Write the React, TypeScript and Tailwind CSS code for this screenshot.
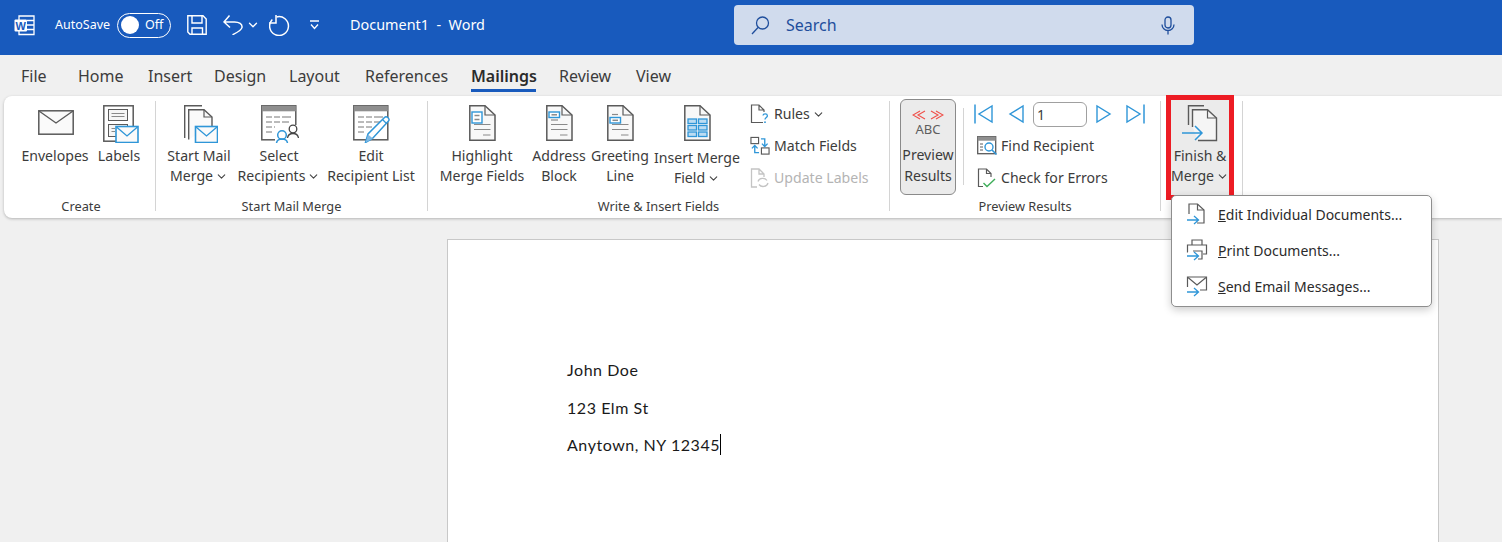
import type { ReactNode } from "react"
import { ChevronDown } from "lucide-react"

const GRAY = "#5a5a5a"
const BLUE = "#2f96d8"
const DIS = "#c4c4c4"

const tabs = ["File", "Home", "Insert", "Design", "Layout", "References", "Mailings", "Review", "View"]
const tabWidths: Record<string, string> = {
  File: "w-[57px]",
  Home: "w-[70px]",
  Insert: "w-[66px]",
  Design: "w-[75px]",
  Layout: "w-[76px]",
  References: "w-[106px]",
  Mailings: "w-[88px]",
  Review: "w-[77px]",
  View: "w-[50px]",
}

function Caret() {
  return <ChevronDown size={13} strokeWidth={2} className="inline-block ml-[2px] align-[-2px] text-[#444]" />
}

function MiniEnvelope({ x, y, w = 22, h = 16 }: { x: number; y: number; w?: number; h?: number }) {
  return (
    <>
      <rect x={x + 0.5} y={y + 0.5} width={w} height={h} fill="#fafafa" stroke={BLUE} strokeWidth="1.6" />
      <path d={`M${x + 1} ${y + 1}L${x + w / 2 + 0.5} ${y + h * 0.62}L${x + w} ${y + 1}`} fill="none" stroke={BLUE} strokeWidth="1.4" />
    </>
  )
}

function EnvelopeIcon() {
  return (
    <svg width="36" height="25" viewBox="0 0 36 25" className="mb-[8px] ml-[1px]">
      <rect x="0.800" y="0.800" width="34.400" height="23.400" fill="#fafafa" stroke={GRAY} strokeWidth="1.500" />
      <path d="M1 1L18 13L35 1" fill="none" stroke={GRAY} strokeWidth="1.400" />
    </svg>
  )
}

function LabelsIcon() {
  return (
    <svg width="36" height="38" viewBox="0 0 36 38" className="ml-[4px]">
      <rect x="0.800" y="0.800" width="29.400" height="35.400" fill="#fff" stroke={GRAY} strokeWidth="1.500" />
      <rect x="5.500" y="4.500" width="19" height="11" fill="#f6f6f6" stroke={GRAY} strokeWidth="1" />
      <path d="M8.500 8.500H21.500M8.500 11.500H21.500" stroke="#8a8a8a" strokeWidth="1" />
      <rect x="5.500" y="19.500" width="19" height="12" fill="#f6f6f6" stroke={GRAY} strokeWidth="1" />
      <path d="M8.500 23.500H12M8.500 26.500H12" stroke="#8a8a8a" strokeWidth="1" />
      <MiniEnvelope x={12.500} y={21} />
    </svg>
  )
}

function MergeDocIcon() {
  return (
    <svg width="34" height="38" viewBox="0 0 34 38" className="ml-[4px]">
      <path d="M0.700 33V0.700H18" fill="none" stroke={GRAY} strokeWidth="1.400" />
      <path d="M4.700 34.500V4.700H20L28 12V21" fill="#fafafa" stroke={GRAY} strokeWidth="1.400" />
      <path d="M20 4.700V12H28" fill="none" stroke={GRAY} strokeWidth="1.200" />
      <MiniEnvelope x={11} y={21} />
    </svg>
  )
}

function TableHead() {
  return (
    <>
      <rect x="0.800" y="0.800" width="34" height="34" fill="#fff" stroke={GRAY} strokeWidth="1.500" />
      <rect x="0.800" y="0.800" width="34" height="5.500" fill="#8f8f8f" />
      <path d="M5 12H11M13 12H19M21 12H30M5 17H11M13 17H19M21 17H28M5 22H11M13 22H19M5 27H11" stroke="#777" strokeWidth="1" />
    </>
  )
}

function SelectIcon() {
  return (
    <svg width="38" height="38" viewBox="0 0 38 38" className="ml-[1px]">
      <TableHead />
      <rect x="14" y="20" width="24" height="18" fill="#fff" />
      <circle cx="32" cy="24" r="3.800" fill="#fff" stroke="#444" strokeWidth="1.300" />
      <path d="M26.500 33c.5-3.200 2.500-4.500 5.500-4.500s5 1.300 5.500 4.500" fill="none" stroke="#444" strokeWidth="1.300" />
      <circle cx="21" cy="30" r="4.300" fill="#fff" stroke={BLUE} strokeWidth="1.500" />
      <path d="M15.500 38c.5-3 2.500-4 5.500-4s5 1 5.500 4" fill="none" stroke={BLUE} strokeWidth="1.500" />
    </svg>
  )
}

function EditListIcon() {
  return (
    <svg width="38" height="38" viewBox="0 0 38 38" className="ml-[1px]">
      <TableHead />
      <path d="M12.500 37.500L15 29L31.500 12.500C33.500 10.500 37.500 14 35.500 16L19.500 33.500Z" fill="#fff" stroke={BLUE} strokeWidth="1.500" />
      <path d="M12.500 37.500L15 29.500L20 33.500Z" fill="#7fb9e3" />
      <path d="M29.500 14.500L33.500 18.500" stroke={BLUE} strokeWidth="1.200" />
    </svg>
  )
}

function FieldPage({ children, bars = true }: { children: ReactNode; bars?: boolean }) {
  return (
    <svg width="27" height="36" viewBox="0 0 27 36" className="mb-[2px]">
      <path d="M0.800 0.800H16L26 10V35.200H0.800Z" fill="#f8f8f8" stroke={GRAY} strokeWidth="1.500" />
      <path d="M16 0.800V10H26" fill="none" stroke={GRAY} strokeWidth="1.200" />
      {bars && <path d="M5 19.500H21.500M5 24.500H21.500M14 30H21.500" stroke="#8a8a8a" strokeWidth="1.200" />}
      {children}
    </svg>
  )
}

function InsertFieldIcon() {
  const cells = [14, 20.500, 27]
  return (
    <FieldPage bars={false}>
      {cells.map((y) => (
        <g key={y}>
          <rect x="4" y={y} width="8.500" height="4.500" fill="#bcdcf2" stroke={BLUE} strokeWidth="1.300" />
          <rect x="14.500" y={y} width="8.500" height="4.500" fill="#bcdcf2" stroke={BLUE} strokeWidth="1.300" />
        </g>
      ))}
    </FieldPage>
  )
}

function RulesIcon() {
  return (
    <svg width="20" height="20" viewBox="0 0 20 20">
      <path d="M13 18.500H1.500V1H9L14 6V8M9 1V6H14" fill="none" stroke={GRAY} strokeWidth="1.200" />
      <path d="M13 11.500c.3-2 4.200-2.200 4.400.3.100 1.700-2.400 1.700-2.400 3.700" fill="none" stroke={BLUE} strokeWidth="1.300" />
      <circle cx="15" cy="18.200" r="0.900" fill={BLUE} />
    </svg>
  )
}

function MatchIcon() {
  return (
    <svg width="21" height="20" viewBox="0 0 21 20">
      <rect x="1" y="1" width="8" height="6.500" fill="#fff" stroke={GRAY} strokeWidth="1.200" />
      <rect x="12" y="12" width="8" height="6.500" fill="#fff" stroke={GRAY} strokeWidth="1.200" />
      <path d="M11.500 2.500H15.500V10M12.500 7.500L15.500 10.500L18.500 7.500" fill="none" stroke={BLUE} strokeWidth="1.400" />
      <path d="M9.500 17H5V10M2 12.500L5 9.500L8 12.500" fill="none" stroke={BLUE} strokeWidth="1.400" />
    </svg>
  )
}

function UpdateIcon() {
  return (
    <svg width="20" height="20" viewBox="0 0 20 20">
      <path d="M7 19H1.500V1H9L14 6V9M9 1V6H14" fill="none" stroke={DIS} strokeWidth="1.300" />
      <path d="M8 13.500a5 4.500 0 0 1 9-1M18 15a5 4.500 0 0 1-9 1.500" fill="none" stroke={DIS} strokeWidth="1.300" />
    </svg>
  )
}

function FindIcon() {
  return (
    <svg width="21" height="20" viewBox="0 0 21 20" className="shrink-0">
      <rect x="0.700" y="0.700" width="18" height="17" fill="#fff" stroke={GRAY} strokeWidth="1.300" />
      <rect x="0.700" y="0.700" width="18" height="4" fill="#8f8f8f" />
      <path d="M3 8H6M3 11H6M3 14H6" stroke={GRAY} strokeWidth="1" />
      <circle cx="12" cy="11" r="4" fill="#fff" stroke={BLUE} strokeWidth="1.400" />
      <path d="M15 14L19.500 18.500" stroke={BLUE} strokeWidth="1.600" />
    </svg>
  )
}

function CheckIcon() {
  return (
    <svg width="20" height="20" viewBox="0 0 20 20">
      <path d="M6 18.500H1.500V1H9.500L14 5.500V9M9.500 1V5.500H14" fill="none" stroke={GRAY} strokeWidth="1.200" />
      <path d="M6.500 15L10 18.500L18 11" fill="none" stroke="#3fae5a" strokeWidth="1.400" />
    </svg>
  )
}

function NavIcon({ dir, bar }: { dir: "l" | "r"; bar?: boolean }) {
  return (
    <svg width="20" height="20" viewBox="0 0 20 20" className="shrink-0">
      {dir === "l" ? (
        <>
          {bar && <path d="M1 0.500V19.500" stroke={BLUE} strokeWidth="1.500" />}
          <path d="M18 2V18L5 10Z" fill="#fff" stroke={BLUE} strokeWidth="1.400" />
        </>
      ) : (
        <>
          {bar && <path d="M19 0.500V19.500" stroke={BLUE} strokeWidth="1.500" />}
          <path d="M2 2V18L15 10Z" fill="#fff" stroke={BLUE} strokeWidth="1.400" />
        </>
      )}
    </svg>
  )
}

function FinishIcon() {
  return (
    <svg width="36" height="38" viewBox="0 0 36 38">
      <path d="M6.500 20V0.700H22" fill="none" stroke={GRAY} strokeWidth="1.400" />
      <path d="M10.500 22V4.700H25.500L34.500 13V35.500H16" fill="#f5f5f5" stroke={GRAY} strokeWidth="1.400" />
      <path d="M25.500 4.700V13H34.500" fill="none" stroke={GRAY} strokeWidth="1.200" />
      <path d="M0 28H20M13 21L20 28L13 35" fill="none" stroke={BLUE} strokeWidth="1.500" />
    </svg>
  )
}

function MenuArrow() {
  return <path d="M1 17H12M8 13L12.500 17L8 21" fill="none" stroke={BLUE} strokeWidth="1.300" />
}

function MenuDocIcon() {
  return (
    <svg width="22" height="22" viewBox="0 0 22 22">
      <path d="M3 11V1H11.500L18 7V20H11" fill="none" stroke={GRAY} strokeWidth="1.200" />
      <path d="M11.500 1V7H18" fill="none" stroke={GRAY} strokeWidth="1.200" />
      <MenuArrow />
    </svg>
  )
}

function MenuPrintIcon() {
  return (
    <svg width="22" height="22" viewBox="0 0 22 22">
      <path d="M6 6V1H16V6" fill="none" stroke={GRAY} strokeWidth="1.200" />
      <path d="M2 13H1.500V6H20.500V15H17" fill="none" stroke={GRAY} strokeWidth="1.200" />
      <path d="M7 12H16V20H12" fill="none" stroke={GRAY} strokeWidth="1.200" />
      <MenuArrow />
    </svg>
  )
}

function MenuMailIcon() {
  return (
    <svg width="22" height="22" viewBox="0 0 22 22">
      <path d="M1.500 12V2H20.500V15H14" fill="none" stroke={GRAY} strokeWidth="1.200" />
      <path d="M2 2.500L11 10L20 2.500" fill="none" stroke={GRAY} strokeWidth="1.200" />
      <MenuArrow />
    </svg>
  )
}

function WordLogo() {
  return (
    <svg width="21" height="21" viewBox="0 0 21 21">
      <path d="M5 1H20V19.500H5Z" fill="none" stroke="#fff" strokeWidth="1.300" />
      <path d="M13 5.500H20M13 10H20M13 14.500H20" stroke="#fff" strokeWidth="1.300" />
      <rect x="0.500" y="4.500" width="12.500" height="12" rx="1" fill="#fff" />
      <text x="6.700" y="14.500" fontSize="11" fontWeight="700" textAnchor="middle" fill="#185abd" fontFamily="Liberation Sans">W</text>
    </svg>
  )
}

function BigButton({ width, icon, children, lift = "" }: { width: string; icon: ReactNode; children: ReactNode; lift?: string }) {
  return (
    <div className={`${width} shrink-0 flex flex-col items-center text-center`}>
      <div className="h-[42px] flex items-end justify-center">{icon}</div>
      <div className={`mt-[3px] leading-[20px] whitespace-nowrap ${lift}`}>{children}</div>
    </div>
  )
}

function Group({ width, label, children, pad = "" }: { width: string; label: string; children: ReactNode; pad?: string }) {
  return (
    <section className={`${width} shrink-0 h-[110px] mt-[5px] border-r border-[#d4d4d4] flex flex-col`}>
      <div className="flex-1 flex min-h-0">{children}</div>
      <div className={`h-[10px] text-center text-[12.800px] leading-[10px] text-[#3c3c3c] whitespace-nowrap ${pad}`}>{label}</div>
    </section>
  )
}

function SmallRow({ icon, children, muted }: { icon: ReactNode; children: ReactNode; muted?: boolean }) {
  return (
    <div className={`h-[32px] flex items-center gap-[4px] whitespace-nowrap ${muted ? "text-[#b4b4b4]" : ""}`}>
      <span className="w-[20px] flex justify-center">{icon}</span>
      <span>{children}</span>
    </div>
  )
}

function MenuItem({ icon, hot, rest }: { icon: ReactNode; hot: string; rest: string }) {
  return (
    <div className="h-[36px] flex items-center pl-[14px] gap-[10px] whitespace-nowrap text-[14px] text-[#2b2b2b]">
      {icon}
      <span>
        <u>{hot}</u>
        {rest}
      </span>
    </div>
  )
}

export default function App() {
  return (
    <div
      className="relative w-[1502px] h-[542px] overflow-hidden bg-[#f0f0f0] text-[14.100px] text-[#3c3c3c]"
      style={{ fontFamily: '"Noto Sans", sans-serif' }}
    >
      {/* Title bar */}
      <header className="h-[55px] pb-[5px] bg-[#185abd] text-white flex items-center pl-[14px]">
        <WordLogo />
        <span className="ml-[20px] text-[12.500px]">AutoSave</span>
        <div className="ml-[7px] w-[54px] h-[25px] rounded-full border border-white flex items-center pl-[3px] text-[12.500px]">
          <span className="w-[18px] h-[18px] rounded-full bg-white" />
          <span className="ml-[6px]">Off</span>
        </div>
        <svg width="20" height="20" viewBox="0 0 20 20" className="ml-[16px]" fill="none" stroke="#fff" strokeWidth="1.400">
          <path d="M0.800 0.800H16L19.200 4V19.200H3L0.800 17Z" />
          <path d="M5 0.800V8H15V0.800M5 19.200V13H15.500V19.200" />
        </svg>
        <svg width="20" height="20" viewBox="0 0 20 20" className="ml-[16px]" fill="none" stroke="#fff" strokeWidth="1.500">
          <path d="M6.500 0.500L1 7L7 12.500M1 7H11.500C16 7 19.500 9 19 12.500C18.500 15.500 12 18.500 9.500 19.800" />
        </svg>
        <ChevronDown size={14} strokeWidth={2.200} className="ml-[3px]" />
        <svg width="21" height="21" viewBox="0 0 21 21" className="ml-[9px]" fill="none" stroke="#fff" strokeWidth="1.500">
          <path d="M3.300 4.500A9.400 9.400 0 1 0 7.500 2" />
          <path d="M7 0V8H0" />
        </svg>
        <svg width="11" height="10" viewBox="0 0 11 10" className="ml-[19px]" fill="none" stroke="#fff" strokeWidth="1.300">
          <path d="M1 1H10M2 4.500L5.500 8.500L9 4.500" />
        </svg>
        <span className="ml-[30px] text-[14.400px] whitespace-pre">Document1  -  Word</span>
        <div className="ml-[249px] w-[460px] h-[40px] rounded-[4px] bg-[#d0dbed] flex items-center pl-[17px] pr-[19px] text-[#1f4e9c]">
          <svg width="19" height="19" viewBox="0 0 19 19" fill="none" stroke="#1f4e9c" strokeWidth="1.300">
            <circle cx="11.500" cy="7" r="6" />
            <path d="M7 11.500L1 18" />
          </svg>
          <span className="ml-[16px] flex-1 text-[16px]">Search</span>
          <svg width="14" height="19" viewBox="0 0 14 19" fill="none" stroke="#1f4e9c" strokeWidth="1.300">
            <rect x="4" y="1" width="6" height="11" rx="3" />
            <path d="M1 8.500a6 6 0 0 0 12 0M7 15V18.500" />
          </svg>
        </div>
      </header>

      {/* Tabs */}
      <nav className="h-[41px] flex items-center pl-[21px] text-[16px] text-[#3c3c3c]">
        {tabs.map((tab) => (
          <div key={tab} className={`${tabWidths[tab]} relative h-full flex items-center shrink-0`}>
            <span className={tab === "Mailings" ? "font-semibold text-[#2b2b2b]" : ""}>{tab}</span>
            {tab === "Mailings" && <span className="absolute left-0 top-[34px] w-[65px] h-[3px] bg-[#185abd]" />}
          </div>
        ))}
      </nav>

      {/* Ribbon */}
      <div className="ml-[4px] h-[122px] rounded-l-[8px] bg-white shadow-[0_1px_3px_rgba(0,0,0,0.25)] flex">
        <Group width="w-[152px]" label="Create" pad="pl-[3px]">
          <div className="w-[13px]" />
          <BigButton width="w-[76px]" icon={<EnvelopeIcon />}>Envelopes</BigButton>
          <BigButton width="w-[52px]" icon={<LabelsIcon />}>Labels</BigButton>
        </Group>
        <Group width="w-[272px]" label="Start Mail Merge">
          <div className="w-[5px]" />
          <BigButton width="w-[76px]" icon={<MergeDocIcon />}>
            Start Mail
            <br />
            Merge<Caret />
          </BigButton>
          <BigButton width="w-[84px]" icon={<SelectIcon />}>
            Select
            <br />
            Recipients<Caret />
          </BigButton>
          <BigButton width="w-[100px]" icon={<EditListIcon />}>
            Edit
            <br />
            Recipient List
          </BigButton>
        </Group>
        <Group width="w-[462px]" label="Write & Insert Fields">
          <div className="w-[8px]" />
          <BigButton
            width="w-[92px]"
            icon={
              <FieldPage>
                <rect x="3" y="7" width="10" height="11" fill="#fff" stroke={BLUE} strokeWidth="1.400" />
                <path d="M5.500 10.500H10.500M5.500 14.500H10.500" stroke="#8a8a8a" strokeWidth="1.500" />
              </FieldPage>
            }
          >
            Highlight
            <br />
            Merge Fields
          </BigButton>
          <BigButton
            width="w-[62px]"
            icon={
              <FieldPage>
                <rect x="3" y="7" width="10.500" height="5.500" fill="#fff" stroke={BLUE} strokeWidth="1.400" />
                <path d="M5.500 9.800H11" stroke="#8a8a8a" strokeWidth="1.500" />
                <path d="M5 15H12" stroke="#8a8a8a" strokeWidth="1.200" />
              </FieldPage>
            }
          >
            Address
            <br />
            Block
          </BigButton>
          <BigButton
            width="w-[60px]"
            icon={
              <FieldPage>
                <path d="M5 9.500H11" stroke="#8a8a8a" strokeWidth="1.200" />
                <rect x="3" y="12.500" width="10.500" height="5.500" fill="#fff" stroke={BLUE} strokeWidth="1.400" />
                <path d="M5.500 15.300H11" stroke="#8a8a8a" strokeWidth="1.500" />
              </FieldPage>
            }
          >
            Greeting
            <br />
            Line
          </BigButton>
          <BigButton width="w-[94px]" lift="pt-[2px]" icon={<InsertFieldIcon />}>
            Insert Merge
            <br />
            Field<Caret />
          </BigButton>
          <div className="ml-[6px] -mt-[3px]">
            <SmallRow icon={<RulesIcon />}>
              Rules<Caret />
            </SmallRow>
            <SmallRow icon={<MatchIcon />}>Match Fields</SmallRow>
            <SmallRow icon={<UpdateIcon />} muted>Update Labels</SmallRow>
          </div>
        </Group>
        <Group width="w-[271px]" label="Preview Results">
          <div className="ml-[10px] w-[56px] h-[96px] -mt-[2px] rounded-[6px] border border-[#8a8a8a] bg-[#ebebeb] flex flex-col items-center shrink-0">
            <svg width="32" height="10" viewBox="0 0 32 10" className="mt-[10px]" fill="none" stroke="#f0504a" strokeWidth="1.100">
              <path d="M8 1L1 5L8 9M13 1L6 5L13 9M19 1L26 5L19 9M24 1L31 5L24 9" />
            </svg>
            <span className="text-[13px] leading-[17px] mt-[1px] text-[#5e5e5e]">ABC</span>
            <span className="mt-[7px] leading-[20.500px] text-center">
              Preview
              <br />
              Results
            </span>
          </div>
          <div className="ml-[7px] mt-[7px] h-[77px] w-px bg-[#d4d4d4] shrink-0" />
          <div className="ml-[13px] -mt-[3px]">
            <div className="h-[32px] -ml-[3px] flex items-center">
              <NavIcon dir="l" bar />
              <div className="ml-[11px]"><NavIcon dir="l" /></div>
              <div className="ml-[8px] w-[54px] h-[25px] rounded-[6px] border border-[#a0a0a0] pl-[3px] flex items-center text-[14px] shrink-0">1</div>
              <div className="ml-[8px]"><NavIcon dir="r" /></div>
              <div className="ml-[10px]"><NavIcon dir="r" bar /></div>
            </div>
            <SmallRow icon={<FindIcon />}>Find Recipient</SmallRow>
            <SmallRow icon={<CheckIcon />}>Check for Errors</SmallRow>
          </div>
        </Group>
        <Group width="w-[82px]" label="">
          <div className="ml-[5px] w-[68px] h-[105px] -mt-[6px] border-[5px] border-[#ed1c24] shrink-0">
            <div className="h-[95px] bg-[#ebebeb] flex flex-col items-center">
              <div className="mt-[5px] h-[38px]"><FinishIcon /></div>
              <div className="mt-[3px] leading-[20px] text-center whitespace-nowrap">
                Finish &
                <br />
                Merge<Caret />
              </div>
            </div>
          </div>
        </Group>
      </div>

      {/* Document page */}
      <main className="mt-[21px] ml-[447px] w-[992px] h-[400px] bg-white border border-[#c8c8c8] pl-[119px] pt-[111px] text-[16px] text-[#1a1a1a]" style={{ fontFamily: "Lato, sans-serif" }}>
        <p className="leading-[37.500px] tracking-[0.550px]">John Doe</p>
        <p className="leading-[37.500px] tracking-[0.550px]">123 Elm St</p>
        <p className="leading-[37.500px] tracking-[0.550px] flex items-center">
          Anytown, NY 12345
          <span className="inline-block w-px h-[21px] bg-black" />
        </p>
      </main>

      {/* Finish & Merge menu */}
      <div className="absolute left-[1171px] top-[195px] w-[261px] h-[112px] rounded-[5px] bg-white border border-[#8e8e8e] shadow-[0_3px_8px_rgba(0,0,0,0.2)]">
        <MenuItem icon={<MenuDocIcon />} hot="E" rest="dit Individual Documents..." />
        <MenuItem icon={<MenuPrintIcon />} hot="P" rest="rint Documents..." />
        <MenuItem icon={<MenuMailIcon />} hot="S" rest="end Email Messages..." />
      </div>
    </div>
  )
}
